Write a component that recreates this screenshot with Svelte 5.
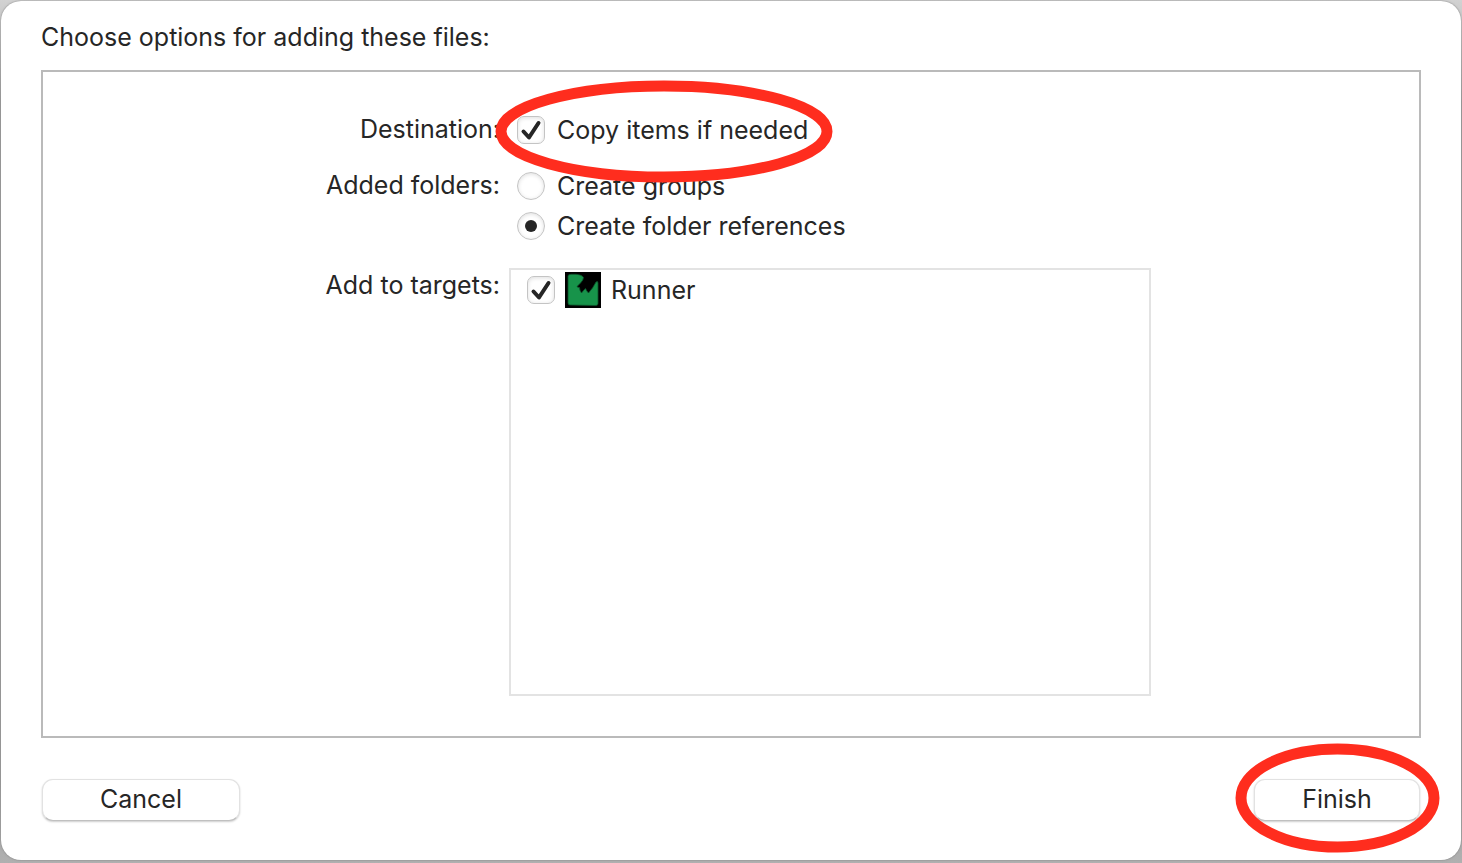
<script>
  let copyItems = $state(true);
  let folderMode = $state('references');
  let targets = $state([{ name: 'Runner', included: true }]);
</script>

<main class="backdrop">
  <form class="sheet" onsubmit={(e) => e.preventDefault()}>
    <h1>Choose options for adding these files:</h1>

    <section class="panel">
      <span class="caption">Destination:</span>
      <div class="choices">
        <label class="choice marked">
          <input type="checkbox" bind:checked={copyItems} />
          <span>Copy items if needed</span>
          <svg class="ring ring-option" viewBox="0 0 338 103" preserveAspectRatio="none" aria-hidden="true">
            <ellipse cx="169" cy="51.5" rx="163" ry="45.5" />
          </svg>
        </label>
      </div>

      <span class="caption" id="folders">Added folders:</span>
      <div class="choices" role="radiogroup" aria-labelledby="folders">
        <label class="choice">
          <input type="radio" name="folders" value="groups" bind:group={folderMode} />
          <span>Create groups</span>
        </label>
        <label class="choice">
          <input type="radio" name="folders" value="references" bind:group={folderMode} />
          <span>Create folder references</span>
        </label>
      </div>

      <span class="caption list-caption" id="targets">Add to targets:</span>
      <ul class="targets" aria-labelledby="targets">
        {#each targets as target}
          <li>
            <label class="target">
              <input type="checkbox" bind:checked={target.included} />
              <svg class="app-icon" viewBox="0 0 36 36" aria-hidden="true">
                <rect width="36" height="36" fill="#000" />
                <path
                  d="M3 4Q3 2.500 6 2.300L11 2.300Q17 2.800 18.500 5.500Q18.500 8 15.500 11L12 14.500Q12.500 15.500 14.500 15.500Q14.500 18.500 16.500 21Q18.500 18 20.500 16.500Q21.500 19 23.500 21Q28 16 31 10Q33 8.500 33 11L33 31.500Q33 33.500 31 33.500L5 33Q3 33 3 31Z"
                  fill="#17934a"
                  stroke="#0b5229"
                  stroke-width="0.8"
                />
              </svg>
              <span>{target.name}</span>
            </label>
          </li>
        {/each}
      </ul>
    </section>

    <footer>
      <button type="button" class="cancel">Cancel</button>
      <button type="submit" class="finish marked">
        Finish
        <svg class="ring ring-button" viewBox="0 0 205 110" preserveAspectRatio="none" aria-hidden="true">
          <ellipse cx="102.5" cy="55" rx="96.5" ry="49" />
        </svg>
      </button>
    </footer>
  </form>
</main>

<style>
  :global(body) {
    margin: 0;
  }

  .backdrop {
    box-sizing: border-box;
    display: flex;
    min-height: 100vh;
    padding: 1px 1px 3px;
    background: linear-gradient(#d2d2d2, #a0a0a0 12%, #a0a0a0 90%, #b0b0b0);
    color: #262626;
    font: 25px/32px Inter, 'Liberation Sans', sans-serif;
  }

  .sheet {
    box-sizing: border-box;
    display: flex;
    flex: 1;
    flex-direction: column;
    padding: 20px 40px 39px;
    border-radius: 20px;
    background: #fff;
    box-shadow: 0 0 2px #777;
  }

  h1 {
    margin: 0 0 17px;
    font: inherit;
  }

  .panel {
    box-sizing: border-box;
    display: grid;
    flex: 1;
    grid-template-columns: minmax(0, 1fr) minmax(0, 2fr);
    grid-template-rows: auto auto 1fr;
    column-gap: 9px;
    row-gap: 24px;
    padding: 42px 0 40px 2px;
    border: 2px solid #bababa;
  }

  .caption {
    line-height: 30px;
    text-align: right;
  }

  .list-caption {
    padding-top: 4px;
  }

  .choices {
    display: flex;
    flex-direction: column;
    align-items: flex-start;
    gap: 8px;
    padding-left: 8px;
  }

  .choice,
  .target {
    display: flex;
    align-items: center;
  }

  .choice {
    gap: 12px;
  }

  .marked {
    position: relative;
  }

  input {
    display: grid;
    flex: none;
    place-items: center;
    width: 28px;
    height: 28px;
    margin: 0;
    border: 1px solid #c4c4c4;
    background: #fff;
    box-shadow: inset 0 1px 4px #0002;
    appearance: none;
  }

  input[type='checkbox'] {
    border-radius: 7px;
  }

  input[type='radio'] {
    border-radius: 50%;
  }

  input[type='checkbox']:checked {
    background: #fff
      url("data:image/svg+xml,%3Csvg xmlns='http://www.w3.org/2000/svg' viewBox='0 0 26 26'%3E%3Cpath d='M5.500 14.500L11 20.500L20.500 6' fill='none' stroke='%23262626' stroke-width='4' stroke-linecap='round' stroke-linejoin='round'/%3E%3C/svg%3E")
      center / 100% no-repeat;
  }

  input[type='radio']:checked::before {
    width: 12px;
    height: 12px;
    border-radius: 50%;
    background: #262626;
    content: '';
  }

  .targets {
    box-sizing: border-box;
    width: 94%;
    max-width: 642px;
    margin: 2px 0 0;
    padding: 2px 16px;
    border: 2px solid #e3e3e3;
    list-style: none;
  }

  .target {
    gap: 10px;
  }

  .app-icon {
    width: 36px;
    height: 36px;
  }

  footer {
    display: flex;
    justify-content: space-between;
    margin-top: 41px;
    padding: 0 1px;
  }

  button {
    height: 42px;
    padding: 0 0 2px;
    border: 1px solid #e2e2e2;
    border-bottom-color: #c0c0c0;
    border-radius: 11px;
    background: #fff;
    box-shadow: 0 1px 2px #0003;
    color: inherit;
    font: inherit;
  }

  .cancel {
    width: 198px;
  }

  .finish {
    width: 166px;
  }

  .ring {
    position: absolute;
    z-index: 1;
    fill: none;
    stroke: #ff2d1e;
    stroke-width: 11;
    pointer-events: none;
  }

  .ring-option {
    top: -34px;
    left: -22px;
    width: 338px;
    height: 103px;
  }

  .ring-button {
    top: -37px;
    left: -20px;
    width: 205px;
    height: 110px;
  }
</style>
